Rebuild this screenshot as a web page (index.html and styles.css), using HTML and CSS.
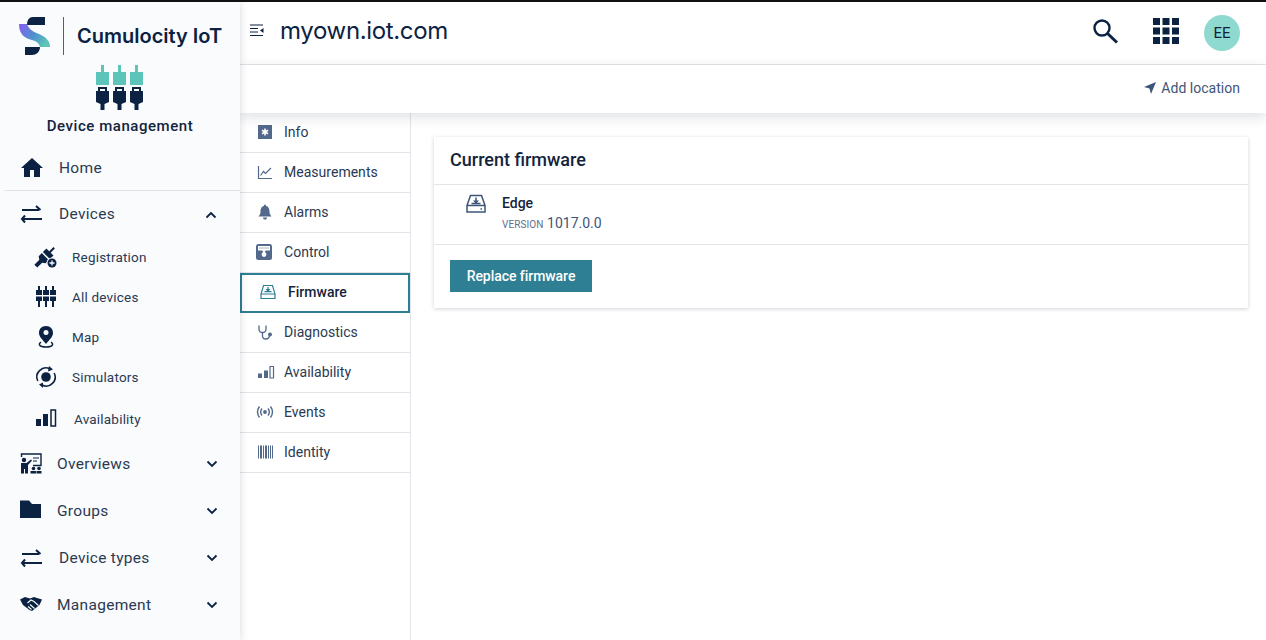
FILE: index.html
```html
<!DOCTYPE html>
<html lang="en">
<head>
  <meta charset="UTF-8" />
  <meta name="viewport" content="width=device-width, initial-scale=1.0" />
  <title>myown.iot.com</title>
  <link rel="stylesheet" href="styles.css">
</head>
<body>
  <div class="app">
    <aside class="sidebar">
      <div class="brand">
        <svg class="brand-logo" width="32" height="38" viewBox="0 0 32 38">
          <defs>
            <linearGradient id="sgrad" x1="0" y1="0" x2="1" y2="0.6">
              <stop offset="0" stop-color="#8b5cf0"/>
              <stop offset="0.55" stop-color="#4f8fd0"/>
              <stop offset="1" stop-color="#5cc4b8"/>
            </linearGradient>
          </defs>
          <path d="M26 0H14C10 0 8 3 8 8H26Z" fill="#0b2242"/>
          <path d="M0 7H8C10 13 15 15 20 17C27 20 31 24 31 30H21C20 26 17 24 13 23C6 21 0 18 0 7Z" fill="url(#sgrad)"/>
          <path d="M6 30H21C21 35 17 38 13 38H6Z" fill="#0b2242"/>
        </svg>
        <span class="brand-rule"></span>
        <span class="brand-name">Cumulocity IoT</span>
      </div>
      <div class="app-badge">
        <svg width="48" height="48" viewBox="0 0 48 48">
          <g id="plug">
            <path d="M5 1H8V8H5ZM0 8H13V21H0Z" fill="#5cc4b8"/>
            <path d="M2 23H11V27H13V38L8.500 40V46H4.500V40L0 38V27H2Z" fill="#0b2242"/>
            <path d="M4 25H9V27H4Z" fill="#f9fbfd"/>
          </g>
          <use href="#plug" x="17"/>
          <use href="#plug" x="34"/>
        </svg>
        <div class="app-name">Device management</div>
      </div>
      <nav>
        <a class="nav-row nav-home">
          <svg class="nav-icon" width="22" height="22" viewBox="0 0 22 22"><path d="M11 1L0 11H3V20H9V13H13V20H19V11H22Z" fill="#0b2242"/></svg>
          <span>Home</span>
        </a>
        <a class="nav-row nav-open">
          <svg class="nav-icon" width="22" height="22" viewBox="0 0 22 22"><path d="M1 7H18M15 3L19.500 7M1 16H21M4 12.500L1 16L4 19.500" fill="none" stroke="#0b2242" stroke-width="2"/></svg>
          <span>Devices</span>
          <svg class="chev" width="12" height="8" viewBox="0 0 12 8"><path d="M1.500 6.500L6 2L10.500 6.500" fill="none" stroke="#0b2242" stroke-width="1.800"/></svg>
        </a>
        <div class="subnav">
          <a class="sub-row">
            <svg class="sub-icon" width="22" height="22" viewBox="0 0 22 22">
              <g transform="rotate(45 10 11)" fill="#0b2242">
                <path d="M9 -2H11V4H9ZM5 4H15V9H5ZM5 10.500H15V15L12 17V24H8V17L5 15Z"/>
              </g>
              <circle cx="17" cy="17" r="5.500" fill="#f9fbfd"/>
              <circle cx="17" cy="17" r="4.500" fill="#0b2242"/>
              <path d="M14.500 17H19.500M17 14.500V19.500" stroke="#f9fbfd" stroke-width="1.300"/>
            </svg>
            <span>Registration</span>
          </a>
          <a class="sub-row">
            <svg class="sub-icon" width="22" height="22" viewBox="0 0 22 22"><g id="mini"><path d="M3 0H5V4H7V15H5V21H3V15H1V4H3Z" fill="#0b2242"/><path d="M1 9H7V10.500H1Z" fill="#f9fbfd"/></g><use href="#mini" x="7"/><use href="#mini" x="14"/></svg>
            <span>All devices</span>
          </a>
          <a class="sub-row">
            <svg class="sub-icon" width="22" height="22" viewBox="0 0 22 22"><path d="M11 0C6.500 0 4 3 4 7C4 11 8 14 11 18C14 14 18 11 18 7C18 3 15.500 0 11 0Z" fill="#0b2242"/><circle cx="11" cy="6.500" r="2.500" fill="#f9fbfd"/><path d="M6 16C3 18 4 21 11 21C18 21 19 18 16 16" fill="none" stroke="#0b2242" stroke-width="1.500"/></svg>
            <span>Map</span>
          </a>
          <a class="sub-row">
            <svg class="sub-icon" width="22" height="22" viewBox="0 0 22 22"><circle cx="11" cy="11" r="4.800" fill="#0b2242"/><path d="M2.800 15A9 9 0 0 1 15 3M19.200 7A9 9 0 0 1 7 19" fill="none" stroke="#0b2242" stroke-width="1.600"/><path d="M14 0L18 3.500L13 5.500ZM8 16.500L4 18.500L8 22Z" fill="#0b2242"/></svg>
            <span>Simulators</span>
          </a>
          <a class="sub-row sub-wide">
            <svg class="sub-icon" width="22" height="22" viewBox="0 0 22 22"><path d="M1 11H6V18H1ZM8 6H13V18H8Z" fill="#0b2242"/><path d="M16 2H20.500V18H16Z" fill="none" stroke="#0b2242" stroke-width="1.500"/></svg>
            <span>Availability</span>
          </a>
        </div>
        <a class="nav-row nav-big">
          <svg class="nav-icon" width="22" height="22" viewBox="0 0 22 22"><path d="M1.500 4V1H21V12.500H13" fill="none" stroke="#0b2242" stroke-width="1.400"/><circle cx="4" cy="7" r="2.200" fill="#0b2242"/><path d="M1 10H6.500L11 6.500L12 7.500L8 12V20.500H5V16H4V20.500H1Z" fill="#0b2242"/><path d="M13 5H19M13 8H17" stroke="#0b2242"/><circle cx="13.500" cy="15.500" r="1.800" fill="#0b2242"/><circle cx="19" cy="15.500" r="1.800" fill="#0b2242"/><path d="M10.500 20.500V18H16V20.500ZM16.500 20.500V18H21.500V20.500Z" fill="#0b2242"/></svg>
          <span>Overviews</span>
          <svg class="chev" width="12" height="8" viewBox="0 0 12 8"><path d="M1.500 1.500L6 6L10.500 1.500" fill="none" stroke="#0b2242" stroke-width="1.800"/></svg>
        </a>
        <a class="nav-row nav-big">
          <svg class="nav-icon" width="22" height="22" viewBox="0 0 22 22"><path d="M0 0.500H9L12 4H21V18H0Z" fill="#0b2242"/></svg>
          <span>Groups</span>
          <svg class="chev" width="12" height="8" viewBox="0 0 12 8"><path d="M1.500 1.500L6 6L10.500 1.500" fill="none" stroke="#0b2242" stroke-width="1.800"/></svg>
        </a>
        <a class="nav-row">
          <svg class="nav-icon" width="22" height="22" viewBox="0 0 22 22"><path d="M1 7H18M15 3L19.500 7M1 16H21M4 12.500L1 16L4 19.500" fill="none" stroke="#0b2242" stroke-width="2"/></svg>
          <span>Device types</span>
          <svg class="chev" width="12" height="8" viewBox="0 0 12 8"><path d="M1.500 1.500L6 6L10.500 1.500" fill="none" stroke="#0b2242" stroke-width="1.800"/></svg>
        </a>
        <a class="nav-row nav-big">
          <svg class="nav-icon" width="22" height="22" viewBox="0 0 22 22"><path d="M0 5.500L5 3L10 4.500L14 3L17 4L22 5.500L19.500 11L12 17L9.500 16L3 11Z" fill="#0b2242"/><path d="M7.500 9L11 6L14 7.500L18.500 11.500M10 10.500L14.500 14.500M8 12.500L11.500 15.500" fill="none" stroke="#f9fbfd" stroke-width="1.100"/></svg>
          <span>Management</span>
          <svg class="chev" width="12" height="8" viewBox="0 0 12 8"><path d="M1.500 1.500L6 6L10.500 1.500" fill="none" stroke="#0b2242" stroke-width="1.800"/></svg>
        </a>
      </nav>
    </aside>

    <div class="main">
      <header class="topbar">
        <svg class="toggle" width="14" height="14" viewBox="0 0 14 14"><path d="M0 1H13M0 4.500H8M0 8H8M0 11.500H13" stroke="#0b2242" stroke-width="1.200"/><path d="M13.500 4V9L10 6.500Z" fill="#0b2242"/></svg>
        <h1>myown.iot.com</h1>
        <svg class="search" width="28" height="28" viewBox="0 0 28 28"><circle cx="11" cy="11" r="7.500" fill="none" stroke="#0b2242" stroke-width="2.400"/><path d="M16.500 16.500L26 25.500" stroke="#0b2242" stroke-width="3"/></svg>
        <svg class="apps" width="28" height="28" viewBox="0 0 28 28" fill="#0b2242">
          <path d="M1 1H8V8H1ZM10.500 1H17.500V8H10.500ZM20 1H27V8H20ZM1 10.500H8V17.500H1ZM10.500 10.500H17.500V17.500H10.500ZM20 10.500H27V17.500H20ZM1 20H8V27H1ZM10.500 20H17.500V27H10.500ZM20 20H27V27H20Z"/>
        </svg>
        <div class="avatar">EE</div>
      </header>
      <div class="actionbar">
        <a class="add-location">
          <svg width="12" height="12" viewBox="0 0 12 12"><path d="M12 0L0 5L5.500 6.500L7 12Z" fill="#3f5578"/></svg>
          Add location
        </a>
      </div>

      <div class="body-row">
        <ul class="tabs">
          <li class="tab">
            <svg class="tab-icon" width="16" height="16" viewBox="0 0 16 16"><path d="M1 1H15V15H1Z" fill="#53698c"/><path d="M8 4.500V11.500M5 6.300L11 9.700M11 6.300L5 9.700" stroke="#fff" stroke-width="1.600"/></svg>
            Info
          </li>
          <li class="tab">
            <svg class="tab-icon" width="16" height="16" viewBox="0 0 16 16"><path d="M1.500 2V14.500H15" fill="none" stroke="#53698c" stroke-width="1.200"/><path d="M3.500 11.500L6.500 7.500L8.500 9.500L14 4" fill="none" stroke="#53698c" stroke-width="1.200"/></svg>
            Measurements
          </li>
          <li class="tab">
            <svg class="tab-icon" width="16" height="16" viewBox="0 0 16 16"><path d="M8 0.500C9 0.500 9 1.500 9 2C12 2.500 12.500 5.500 12.500 8C12.500 10 13.500 11 14.500 12.500H1.500C2.500 11 3.500 10 3.500 8C3.500 5.500 4 2.500 7 2C7 1.500 7 0.500 8 0.500ZM6 13.500H10C10 15 9 15.500 8 15.500C7 15.500 6 15 6 13.500Z" fill="#53698c"/></svg>
            Alarms
          </li>
          <li class="tab">
            <svg class="tab-icon tab-icon-big" width="16" height="16" viewBox="0 0 16 16"><rect x="0" y="0" width="16" height="16" rx="2.500" fill="#53698c"/><path d="M2 2H14V6.500H2Z" fill="#fff"/><path d="M3.500 4H12.500" stroke="#53698c" stroke-dasharray="1 1"/><circle cx="8" cy="10.500" r="2.400" fill="#fff"/><path d="M6 6H10L8 9Z" fill="#fff"/></svg>
            Control
          </li>
          <li class="tab tab-active">
            <svg class="tab-icon" width="16" height="16" viewBox="0 0 16 16"><path d="M3.500 1.500H12.500L15 10V14.500H1V10ZM1 10H15M8 3V7.500M4.500 7.700H11.500" fill="none" stroke="#2e7f93" stroke-width="1.200"/><path d="M5.500 5H10.500L8 8Z" fill="#2e7f93"/></svg>
            Firmware
          </li>
          <li class="tab">
            <svg class="tab-icon" width="16" height="16" viewBox="0 0 16 16"><path d="M2 1.500V5C2 7.500 4 8.500 5.500 8.500C7 8.500 9 7.500 9 5V1.500M5.500 8.500V12C5.500 14 7 15 9 15C11 15 12 14 12.500 12" fill="none" stroke="#53698c" stroke-width="1.300"/><circle cx="13" cy="10.500" r="2" fill="#53698c"/></svg>
            Diagnostics
          </li>
          <li class="tab">
            <svg class="tab-icon" width="16" height="16" viewBox="0 0 16 16"><path d="M1 9.500H5V14H1ZM7 6.500H11V14H7Z" fill="#53698c"/><path d="M13 2.500H16.500V14H13Z" fill="none" stroke="#53698c" stroke-width="1.200"/></svg>
            Availability
          </li>
          <li class="tab">
            <svg class="tab-icon" width="16" height="16" viewBox="0 0 16 16"><circle cx="8" cy="8" r="1.900" fill="#53698c"/><path d="M5 4.500C3.500 6.500 3.500 9.500 5 11.500M11 4.500C12.500 6.500 12.500 9.500 11 11.500M2.500 2.500C0 6 0 10 2.500 13.500M13.500 2.500C16 6 16 10 13.500 13.500" fill="none" stroke="#53698c" stroke-width="1.400"/></svg>
            Events
          </li>
          <li class="tab">
            <svg class="tab-icon" width="16" height="16" viewBox="0 0 16 16"><path d="M1 1.500V14.500H2V1.500ZM3 1.500V14.500H5V1.500ZM6 1.500V14.500H7V1.500ZM8 1.500V14.500H10V1.500ZM11 1.500V14.500H12V1.500ZM13 1.500V14.500H14V1.500ZM15 1.500V14.500H16V1.500Z" fill="#53698c"/></svg>
            Identity
          </li>
        </ul>

        <section class="content">
          <div class="card">
            <h2 class="card-title">Current firmware</h2>
            <div class="card-item">
              <svg width="20" height="20" viewBox="0 0 20 20"><path d="M4.500 1.500H15.500L19 11.500V18H1V11.500ZM1 11.500H19M10 3.500V9M5.500 9.500H14.500M14.500 15H16" fill="none" stroke="#3f5578" stroke-width="1.500"/><path d="M7 6.500H13L10 10Z" fill="#3f5578"/></svg>
              <div>
                <div class="item-name">Edge</div>
                <div class="item-version"><small>VERSION</small> 1017.0.0</div>
              </div>
            </div>
            <div class="card-footer">
              <button class="btn-primary">Replace firmware</button>
            </div>
          </div>
        </section>
      </div>
    </div>
  </div>
</body>
</html>
```

FILE: styles.css
```css
* { box-sizing: border-box; }
html, body { height: 100%; }
body { margin: 0; font-family: Roboto, "Liberation Sans", sans-serif; color: #14233c; background: #fff; overflow: hidden; }
svg { display: block; flex: none; overflow: visible; }
ul { list-style: none; margin: 0; padding: 0; }

.app { display: flex; height: 640px; border-top: 2px solid #111; }

/* left navigator */
.sidebar { position: relative; z-index: 3; width: 240px; flex: none; background: #f9fbfd; box-shadow: 0 0 8px rgba(20,35,60,0.18); }
.brand { display: flex; align-items: center; height: 62px; padding: 6px 0 0 19px; }
.brand-rule { width: 1px; height: 38px; margin: 0 13px 0 12px; background: #4d5f7a; }
.brand-name { font-family: Inter, Roboto, sans-serif; font-size: 20px; font-weight: 600; letter-spacing: 0; color: #0b2242; white-space: nowrap; }
.app-badge { display: flex; flex-direction: column; align-items: center; height: 80px; }
.app-name { margin-top: 5px; font-size: 15px; font-weight: 500; letter-spacing: 0.55px; color: #14233c; }

.nav-row { display: flex; align-items: center; height: 47px; padding: 0 22px 0 21px; font-size: 15.5px; letter-spacing: 0.3px; color: #2a3a52; }
.nav-row span { flex: 1; margin-left: 16px; }
.nav-big { padding-left: 20px; }
.nav-big span { margin-left: 15px; }
.nav-home { margin-left: 4px; padding-top: 2px; padding-left: 17px; border-bottom: 1px solid #e1e4e8; }
.nav-open { height: 46px; padding-right: 23px; }
.chev { margin-top: 1px; }

.subnav { padding-bottom: 1px; }
.sub-row { display: flex; align-items: center; height: 40px; padding-left: 35px; font-size: 13.5px; letter-spacing: 0.2px; color: #2a3a52; }
.sub-row span { margin-left: 15px; }
.sub-wide { margin-top: 2px; }
.sub-wide span { margin-left: 17px; }

/* top part */
.main { flex: 1; display: flex; flex-direction: column; min-width: 0; }
.topbar { display: flex; align-items: center; height: 63px; flex: none; padding: 0 26px 2px 10px; border-bottom: 1px solid #e1e4e8; }
.toggle { margin-top: -2px; }
.topbar h1 { flex: 1; margin: 0 0 4px 16px; font-family: Inter, Roboto, sans-serif; font-size: 24px; font-weight: 400; letter-spacing: -0.35px; color: #0b2242; }
.search { margin: 0 33px 2px 0; }
.apps { margin: 0 24px 2px 0; }
.avatar { display: flex; align-items: center; justify-content: center; width: 36px; height: 36px; margin-top: 2px; border-radius: 50%; background: #8fdad0; font-size: 15px; color: #14233c; }
.actionbar { position: relative; z-index: 2; display: flex; justify-content: flex-end; align-items: center; height: 48px; flex: none; padding: 0 26px 2px 0; background: #fff; box-shadow: 0 4px 12px rgba(20,35,60,0.14); }
.add-location { display: flex; align-items: center; gap: 5px; font-size: 14px; letter-spacing: 0.02px; color: #3f5578; }

.body-row { flex: 1; display: flex; min-height: 0; }
.tabs { width: 171px; flex: none; border-right: 1px solid #e1e4e8; }
.tab { display: flex; align-items: center; height: 40px; padding: 0 0 2px 17px; border-bottom: 1px solid #e1e4e8; font-size: 14px; letter-spacing: 0.02px; color: #2a3a52; }
.tab-icon { margin-right: 11px; }
.tab-icon-big { margin-left: -1px; margin-right: 12px; }
.tab-active { padding: 0 0 2px 18px; border: 2px solid #2e7f93; background: #fff; font-weight: 500; color: #14233c; }
.tab-active .tab-icon { margin-right: 12px; }

/* firmware card */
.content { flex: 1; padding: 24px 18px 0 23px; }
.card { background: #fff; box-shadow: 0 1px 4px rgba(20,35,60,0.2); }
.card-title { display: flex; align-items: center; height: 48px; margin: 0; padding: 0 0 2px 16px; border-bottom: 1px solid #e1e4e8; font-size: 18px; font-weight: 500; color: #14233c; }
.card-item { display: flex; gap: 16px; height: 60px; padding: 9px 0 0 32px; border-bottom: 1px solid #e1e4e8; }
.item-name { font-size: 14px; font-weight: 500; line-height: 18px; color: #14233c; }
.item-version { margin-top: 2px; font-size: 14px; line-height: 18px; color: #3f5578; }
.item-version small { font-size: 10px; letter-spacing: 0.1px; color: #5f6f88; }
.card-footer { height: 63px; padding: 15px 16px 0; }
.btn-primary { height: 32px; width: 142px; padding: 0; border: none; background: #2e7f93; color: #fff; font-family: inherit; font-size: 14px; font-weight: 500; letter-spacing: -0.05px; cursor: pointer; }
```
